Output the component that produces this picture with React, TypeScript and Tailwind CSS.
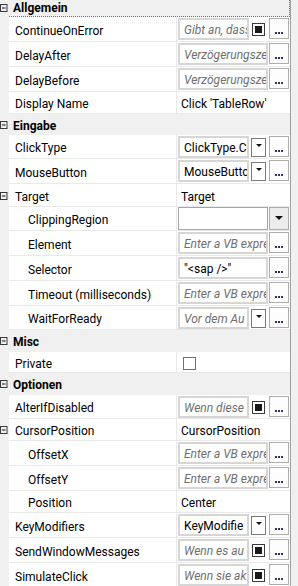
import React from "react";

type V =
  | { k: "text"; t: string }
  | { k: "tb"; t: string; it?: boolean; check?: boolean; drop?: boolean }
  | { k: "combo" }
  | { k: "cb" };

type Row =
  | { type: "h"; label: string; h: string; first?: boolean }
  | { type: "p"; label: string; h: string; indent?: boolean; exp?: boolean; v: V };

const rows: Row[] = [
  { type: "h", label: "Allgemein", h: "h-[17px]", first: true },
  { type: "p", label: "ContinueOnError", h: "h-[25px]", v: { k: "tb", t: "Gibt an, dass", it: true, check: true } },
  { type: "p", label: "DelayAfter", h: "h-[25px]", v: { k: "tb", t: "Verzögerungszeit", it: true } },
  { type: "p", label: "DelayBefore", h: "h-[25px]", v: { k: "tb", t: "Verzögerungszeit", it: true } },
  { type: "p", label: "Display Name", h: "h-[22px]", v: { k: "text", t: "Click 'TableRow'" } },
  { type: "h", label: "Eingabe", h: "h-[21px]" },
  { type: "p", label: "ClickType", h: "h-[24px]", v: { k: "tb", t: "ClickType.CL", drop: true } },
  { type: "p", label: "MouseButton", h: "h-[25px]", v: { k: "tb", t: "MouseButton", drop: true } },
  { type: "p", label: "Target", h: "h-[23px]", exp: true, v: { k: "text", t: "Target" } },
  { type: "p", label: "ClippingRegion", h: "h-[24px]", indent: true, v: { k: "combo" } },
  { type: "p", label: "Element", h: "h-[25px]", indent: true, v: { k: "tb", t: "Enter a VB expre", it: true } },
  { type: "p", label: "Selector", h: "h-[25px]", indent: true, v: { k: "tb", t: "\"<sap />\"" } },
  { type: "p", label: "Timeout (milliseconds)", h: "h-[25px]", indent: true, v: { k: "tb", t: "Enter a VB expre", it: true } },
  { type: "p", label: "WaitForReady", h: "h-[24px]", indent: true, v: { k: "tb", t: "Vor dem Au", it: true, drop: true } },
  { type: "h", label: "Misc", h: "h-[22px]" },
  { type: "p", label: "Private", h: "h-[21px]", v: { k: "cb" } },
  { type: "h", label: "Optionen", h: "h-[22px]" },
  { type: "p", label: "AlterIfDisabled", h: "h-[24px]", v: { k: "tb", t: "Wenn diese", it: true, check: true } },
  { type: "p", label: "CursorPosition", h: "h-[22px]", exp: true, v: { k: "text", t: "CursorPosition" } },
  { type: "p", label: "OffsetX", h: "h-[25px]", indent: true, v: { k: "tb", t: "Enter a VB expre", it: true } },
  { type: "p", label: "OffsetY", h: "h-[25px]", indent: true, v: { k: "tb", t: "Enter a VB expre", it: true } },
  { type: "p", label: "Position", h: "h-[22px]", indent: true, v: { k: "text", t: "Center" } },
  { type: "p", label: "KeyModifiers", h: "h-[25px]", v: { k: "tb", t: "KeyModifie", drop: true } },
  { type: "p", label: "SendWindowMessages", h: "h-[25px]", v: { k: "tb", t: "Wenn es au", it: true, check: true } },
  { type: "p", label: "SimulateClick", h: "h-[25px]", v: { k: "tb", t: "Wenn sie ak", it: true, check: true } },
];

function Expander() {
  return (
    <svg width="8" height="8" viewBox="0 0 8 8" className="block">
      <rect x="0.5" y="0.5" width="6.5" height="7" fill="none" stroke="#3a3a3a" />
      <line x1="2" y1="4" x2="5.5" y2="4" stroke="#111" />
    </svg>
  );
}

function Ellipsis() {
  return (
    <div className="ml-auto mt-[1px] self-start w-[20px] h-[21px] border border-[#adadad] bg-[#fdfdfd] flex items-end justify-center gap-[1px] pb-[4px]">
      <div className="w-[2px] h-[2px] bg-[#2a3560]" />
      <div className="w-[2px] h-[2px] bg-[#2a3560]" />
      <div className="w-[2px] h-[2px] bg-[#2a3560]" />
    </div>
  );
}

function Check() {
  return (
    <div className="ml-[3px] mt-[1px] w-[13px] h-[13px] border border-[#3c3c3c] bg-white p-[2px]">
      <div className="w-full h-full bg-[#1a1a1a]" />
    </div>
  );
}

function Drop() {
  return (
    <div className="ml-[2px] mt-[1px] w-[15px] h-[19px] border border-[#7a7a7a] bg-white flex justify-center pt-[5px]">
      <svg width="6" height="3" viewBox="0 0 6 3" className="block">
        <polygon points="0,0 6,0 3,3" fill="#111" />
      </svg>
    </div>
  );
}

function Value({ v }: { v: V }) {
  if (v.k === "text") {
    return <span className="pl-[4px] pt-[3px] text-black whitespace-nowrap">{v.t}</span>;
  }
  if (v.k === "cb") {
    return <div className="ml-[6px] mt-[2px] w-[13px] h-[13px] border border-[#707070] bg-white" />;
  }
  if (v.k === "combo") {
    return (
      <div className="flex w-full h-full pl-[1px] pr-[1px]">
        <div className="w-[90px] h-full border border-[#a5a5a5] bg-white" />
        <div className="ml-auto w-[20px] h-full border border-[#acacac] bg-[#ececec] flex items-start justify-center pt-[8px]">
          <svg width="8" height="4" viewBox="0 0 8 4" className="block">
            <polygon points="0,0 8,0 4,4" fill="#111" />
          </svg>
        </div>
      </div>
    );
  }
  const small = v.check || v.drop;
  return (
    <div className="flex w-full h-full pl-[1px] pr-[1px] items-center">
      <div
        className={`${small ? "w-[71px]" : "w-[90px]"} self-start mt-[1px] h-[22px] border-2 border-[#d6d6d6] bg-white flex items-center pl-[4px] pt-[2px] overflow-hidden`}
      >
        <span className={`whitespace-nowrap ${v.it ? "italic text-[#6f6f6f]" : "text-black"}`}>{v.t}</span>
      </div>
      {v.check && <Check />}
      {v.drop && <Drop />}
      <Ellipsis />
    </div>
  );
}

export default function App() {
  return (
    <div className="w-[298px] h-[586px] overflow-hidden flex bg-[#f0f0f0] font-['Roboto',sans-serif] text-[12px] leading-[16px]">
      <div className="w-[290px] flex flex-col">
        {rows.map((r, i) =>
          r.type === "h" ? (
            <div
              key={i}
              className={`${r.h} shrink-0 flex items-center bg-[#f0f0f0] ${r.first ? "border-b border-r border-dotted border-[#707070] ml-[9px] pb-[1px]" : ""}`}
            >
              <div className={`${r.first ? "-ml-[9px]" : ""} w-[9px] shrink-0 flex items-center`}>
                <Expander />
              </div>
              <span className={`pl-[4px] ${r.first ? "" : "pt-[2px]"} font-bold text-black`}>{r.label}</span>
            </div>
          ) : (
            <div key={i} className={`${r.h} shrink-0 flex`}>
              <div className="w-[9px] shrink-0 bg-[#f0f0f0] flex items-center">{r.exp && <Expander />}</div>
              <div
                className={`w-[167px] shrink-0 bg-white border-b border-[#e9e9e9] flex items-center pt-[3px] ${r.indent ? "pl-[19px]" : "pl-[6px]"} whitespace-nowrap overflow-hidden text-black`}
              >
                {r.label}
              </div>
              <div className="w-px shrink-0 bg-[#e9e9e9]" />
              <div className="flex-1 bg-white border-b border-[#e9e9e9] flex items-center overflow-hidden">
                <Value v={r.v} />
              </div>
            </div>
          )
        )}
      </div>
      <div className="w-px bg-[#a0a0a0]" />
      <div className="flex-1 bg-[#f0f0f0]" />
    </div>
  );
}
